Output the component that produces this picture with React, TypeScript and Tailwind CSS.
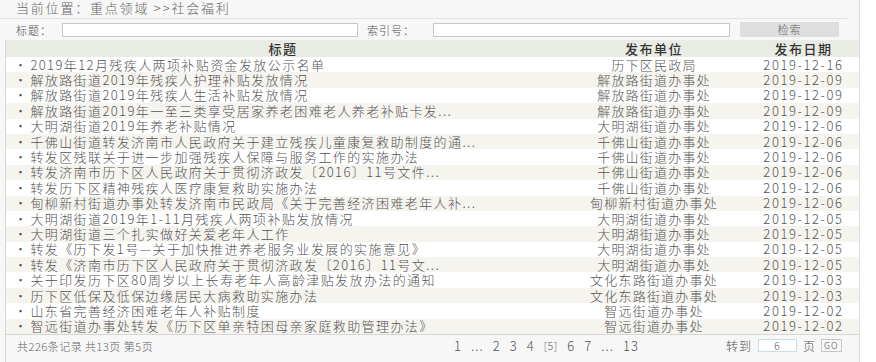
import React from 'react';

interface Row {
  title: string;
  unit: string;
  date: string;
}

const rows: Row[] = [
  { title: '2019年12月残疾人两项补贴资金发放公示名单', unit: '历下区民政局', date: '2019-12-16' },
  { title: '解放路街道2019年残疾人护理补贴发放情况', unit: '解放路街道办事处', date: '2019-12-09' },
  { title: '解放路街道2019年残疾人生活补贴发放情况', unit: '解放路街道办事处', date: '2019-12-09' },
  { title: '解放路街道2019年一至三类享受居家养老困难老人养老补贴卡发...', unit: '解放路街道办事处', date: '2019-12-09' },
  { title: '大明湖街道2019年养老补贴情况', unit: '大明湖街道办事处', date: '2019-12-06' },
  { title: '千佛山街道转发济南市人民政府关于建立残疾儿童康复救助制度的通...', unit: '千佛山街道办事处', date: '2019-12-06' },
  { title: '转发区残联关于进一步加强残疾人保障与服务工作的实施办法', unit: '千佛山街道办事处', date: '2019-12-06' },
  { title: '转发济南市历下区人民政府关于贯彻济政发〔2016〕11号文件...', unit: '千佛山街道办事处', date: '2019-12-06' },
  { title: '转发历下区精神残疾人医疗康复救助实施办法', unit: '千佛山街道办事处', date: '2019-12-06' },
  { title: '甸柳新村街道办事处转发济南市民政局《关于完善经济困难老年人补...', unit: '甸柳新村街道办事处', date: '2019-12-06' },
  { title: '大明湖街道2019年1-11月残疾人两项补贴发放情况', unit: '大明湖街道办事处', date: '2019-12-05' },
  { title: '大明湖街道三个扎实做好关爱老年人工作', unit: '大明湖街道办事处', date: '2019-12-05' },
  { title: '转发《历下发1号—关于加快推进养老服务业发展的实施意见》', unit: '大明湖街道办事处', date: '2019-12-05' },
  { title: '转发《济南市历下区人民政府关于贯彻济政发〔2016〕11号文...', unit: '大明湖街道办事处', date: '2019-12-05' },
  { title: '关于印发历下区80周岁以上长寿老年人高龄津贴发放办法的通知', unit: '文化东路街道办事处', date: '2019-12-03' },
  { title: '历下区低保及低保边缘居民大病救助实施办法', unit: '文化东路街道办事处', date: '2019-12-03' },
  { title: '山东省完善经济困难老年人补贴制度', unit: '智远街道办事处', date: '2019-12-02' },
  { title: '智远街道办事处转发《历下区单亲特困母亲家庭救助管理办法》', unit: '智远街道办事处', date: '2019-12-02' },
];

export default function App() {
  return (
    <div className="w-[876px] h-[362px] bg-white overflow-hidden font-['Noto_Sans_CJK_SC',sans-serif]">
      <div className="w-[860px] h-full bg-[#f7f7f7] border-r border-[#dcdcdc] flex flex-col">
        {/* breadcrumb */}
        <div className="h-[19px] shrink-0 mr-[10px] border-b border-[#e2e2e2] pl-[16px] text-[13px] leading-[16px] tracking-[1.8px] text-[#666] font-light">
          当前位置：重点领域 &gt;&gt;社会福利
        </div>

        {/* search bar */}
        <div className="h-[21px] shrink-0 flex items-center pl-[16px] text-[11px] leading-[14px] tracking-[1px] text-[#555] font-light">
          <span className="w-[46px]">标题：</span>
          <input className="w-[296px] h-[14px] bg-white border border-[#c8c8c8]" />
          <span className="ml-[9px] w-[66px]">索引号：</span>
          <input className="w-[297px] h-[14px] bg-white border border-[#c8c8c8]" />
          <button className="ml-[10px] w-[99px] h-[15px] bg-[#dedede] text-[11px] leading-[15px] text-[#666]">
            检索
          </button>
        </div>

        {/* table */}
        <div className="ml-[5px] flex-1 border-l border-[#d6d6d6] flex flex-col">
          <div className="h-[17px] shrink-0 flex items-center bg-[#e9ebe5] text-[13px] leading-[15px] tracking-[1.5px] text-[#333] font-medium">
            <div className="w-[554px] text-center">标题</div>
            <div className="w-[188px] text-center">发布单位</div>
            <div className="flex-1 text-center">发布日期</div>
          </div>
          {rows.map((r, i) => (
            <div
              key={i}
              className={
                'h-[15.4px] shrink-0 flex items-center text-[13px] leading-[14px] text-[#555] font-light ' +
                (i % 2 === 0 ? 'bg-white' : 'bg-[#f6f4ef]')
              }
            >
              <div className="w-[554px] pl-[8px] whitespace-nowrap tracking-[1.4px]">
                ·<span className="ml-[2px]">{r.title}</span>
              </div>
              <div className="w-[188px] text-center tracking-[1.2px]">{r.unit}</div>
              <div className="flex-1 text-center tracking-[1.6px]">{r.date}</div>
            </div>
          ))}
          <div className="border-t border-[#d6d6d6] h-[22px] shrink-0 flex items-center text-[11px] leading-[14px] text-[#666] font-light">
            <span className="pl-[11px] w-[448px] tracking-[0.5px]">共226条记录 共13页 第5页</span>
            <span className="w-[272px] flex items-center gap-[9px] text-[13px] tracking-[1px] text-[#555]">
              <span>1</span>
              <span>...</span>
              <span>2</span>
              <span>3</span>
              <span>4</span>
              <span className="text-[10px]">[5]</span>
              <span>6</span>
              <span>7</span>
              <span>...</span>
              <span>13</span>
            </span>
            <span className="flex items-center text-[12px] tracking-[1px] text-[#555]">
              <span>转到</span>
              <span className="ml-[6px] w-[39px] h-[13px] border border-[#c8dcef] bg-white text-[10px] leading-[11px] text-center">6</span>
              <span className="ml-[6px]">页</span>
              <span className="ml-[5px] h-[13px] px-[2px] border border-[#c8c8c8] text-[9px] leading-[11px]">GO</span>
            </span>
          </div>
        </div>
      </div>
    </div>
  );
}
